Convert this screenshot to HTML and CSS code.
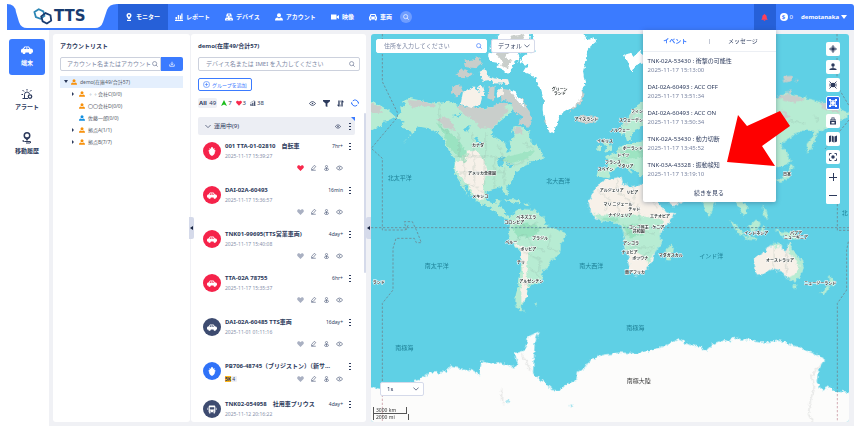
FILE: index.html
```html
<!DOCTYPE html>
<html lang="ja">
<head>
    <meta charset="UTF-8">
    <meta name="viewport" content="width=device-width, initial-scale=1.0">
    <title>TTS モニター</title>
    <link rel="stylesheet" href="styles.css">
</head>
<body>

<!-- Shared icons -->
<svg class="sprite" aria-hidden="true">
    <symbol id="i-pin" viewBox="0 0 16 16"><path fill-rule="evenodd" d="M8 0a5 5 0 0 1 5 5c0 3-3 5-3.500 7h-3C6 10 3 8 3 5a5 5 0 0 1 5-5zm0 3a2.200 2.200 0 1 0 0 4.400A2.200 2.200 0 0 0 8 3z"/><path d="M4 13.500h8V16H4z"/></symbol>
    <symbol id="i-chart" viewBox="0 0 16 16"><path d="M1 8h3v5H1zM5.500 4h3v9h-3zM10 5h2v8h-2zM12.500 1H15v12h-2.500zM0 14h16v2H0z"/></symbol>
    <symbol id="i-device" viewBox="0 0 16 16"><path fill-rule="evenodd" d="M4 1h8l2 6H9v2h5l2 3v3H0v-3l2-3h4V7H2zm2 2v2h4V3zM3 12v1h3v-1zm7 0v1h3v-1z"/></symbol>
    <symbol id="i-user" viewBox="0 0 16 16"><circle cx="8" cy="4.500" r="4"/><path d="M0 15c0-4 2-6 5-6l3 2 3-2c3 0 5 2 5 6z"/></symbol>
    <symbol id="i-video" viewBox="0 0 16 16"><path d="M0 3h11v10H0zM11.500 7 16 4v8l-4.500-3z"/></symbol>
    <symbol id="i-carfront" viewBox="0 0 16 16"><path fill-rule="evenodd" d="M3 2h10l2 5 1 1v5h-1v2h-3v-2H4v2H1v-2H0V8l1-1zm1.500 2L3.500 7h9l-1-3zM2 9v2h3V9zm9 0v2h3V9z"/></symbol>
    <symbol id="i-car" viewBox="0 0 20 14"><path fill-rule="evenodd" d="M6 1h7l3 4c3 0 4 1 4 4v2h-2a2.500 2.500 0 0 1-5 0H7.500a2.500 2.500 0 0 1-5 0H0V8c0-2 1-3 3-3zm1 1.500L5 5.500h4v-3zm3.500 0v3H14l-2-3z"/><circle cx="5" cy="11.500" r="1.600"/><circle cx="15.500" cy="11.500" r="1.600"/></symbol>
    <symbol id="i-bus" viewBox="0 0 16 16"><path fill-rule="evenodd" d="M3 1h10l1 2v10h-1v2h-2v-2H5v2H3v-2H2V3zm1 3v4h8V4zm0 6v1.500h2V10zm6 0v1.500h2V10zM0 5h1v4H0zm15 0h1v4h-1z"/></symbol>
    <symbol id="i-fruit" viewBox="0 0 16 16"><path d="M7 0h2l1 3 3-1-1 3 3 2-2 1c1 4-2 6-5 8-3-2-6-4-5-8L1 7l3-2-1-3 3 1z"/></symbol>
    <symbol id="i-search" viewBox="0 0 16 16"><circle cx="7" cy="7" r="5.500" fill="none" stroke="currentColor" stroke-width="1.800"/><path d="m11 11 4 4" stroke="currentColor" stroke-width="2"/></symbol>
    <symbol id="i-eye" viewBox="0 0 18 12"><path d="M1 6q8-10 16 0-8 10-16 0z" fill="none" stroke="currentColor" stroke-width="2"/><circle cx="9" cy="6" r="2"/></symbol>
    <symbol id="i-funnel" viewBox="0 0 16 16"><path d="M0 0h16v3l-6 5v8l-4-2V8L0 3z"/></symbol>
    <symbol id="i-sort" viewBox="0 0 16 16"><path d="M3 1h3v14H3L0 11h3zM10 1h3l3 4h-3v10h-3zM8 1h1v4H8zM8 10h1v5H8z"/></symbol>
    <symbol id="i-refresh" viewBox="0 0 16 16"><path d="M2 9a6 6 0 0 0 10.500 3M14 7A6 6 0 0 0 3.500 4" fill="none" stroke="currentColor" stroke-width="2"/><path d="M3 8 0 11V6zM13 8l3-3v5z"/></symbol>
    <symbol id="i-heart" viewBox="0 0 16 14"><path d="M8 14 1 7C-2 2 5-2 8 3c3-5 10-1 7 4z"/></symbol>
    <symbol id="i-pencil" viewBox="0 0 16 16"><path d="m3 9 7-8 4 3-7 8-4 1zM2 14h12" fill="none" stroke="currentColor" stroke-width="1.800"/></symbol>
    <symbol id="i-track" viewBox="0 0 16 16"><circle cx="8" cy="4" r="2.800" fill="none" stroke="currentColor" stroke-width="1.800"/><path d="M3 9h10M8 7v7M2 11c0 5 12 5 12 0" fill="none" stroke="currentColor" stroke-width="1.800"/></symbol>
    <symbol id="i-signal" viewBox="0 0 16 16"><path d="M1 10h3v5H1zM6 7h3v8H6zM11 3h3v12h-3z"/><path d="M1 7 12 1M2 15h13" stroke="currentColor"/></symbol>
    <symbol id="i-down" viewBox="0 0 16 16"><path d="M2 9v5h12V9M8 2v8M5 7l3 3 3-3" fill="none" stroke="currentColor" stroke-width="2"/></symbol>
    <symbol id="i-chevron" viewBox="0 0 16 10"><path d="m1 1 7 7 7-7" fill="none" stroke="currentColor" stroke-width="1.800"/></symbol>
    <symbol id="i-plus" viewBox="0 0 16 16"><circle cx="8" cy="8" r="7" fill="none" stroke="currentColor" stroke-width="1.400"/><path d="M4 8h8M8 4v8" stroke="currentColor" stroke-width="1.400"/></symbol>
    <symbol id="i-bell" viewBox="0 0 16 16"><path d="M8 0c1 0 1.500.5 1.500 1.500C12 2 13 4 13 7c0 3 1 4 2 5v1H1v-1c1-1 2-2 2-5 0-3 1-5 3.500-5.500C6.500.5 7 0 8 0zM6 14h4c0 3-4 3-4 0z"/></symbol>
    <symbol id="i-alarm" viewBox="0 0 24 22"><path d="M7 20V12q0-5 5-5 4 0 5 4M3 20h11M4 12H1M6 6 3 3M12 4V1M18 6l3-3" fill="none" stroke="currentColor" stroke-width="2"/><circle cx="18" cy="16" r="3.500" fill="none" stroke="currentColor" stroke-width="2.500"/></symbol>
    <symbol id="i-history" viewBox="0 0 22 24"><circle cx="11" cy="7" r="5.500" fill="none" stroke="currentColor" stroke-width="3"/><path d="M8 12h6l-3 5zM4 16q-4 3 2 3h11q4 1 0 3H9" stroke="currentColor" stroke-width="2" fill="none"/></symbol>
    <symbol id="i-target" viewBox="0 0 16 16"><circle cx="8" cy="8" r="5" fill="none" stroke="currentColor"/><circle cx="8" cy="8" r="3.500"/><path d="M8 0v16M0 8h16" stroke="currentColor" stroke-width="1.600"/></symbol>
    <symbol id="i-stand" viewBox="0 0 16 16"><circle cx="8" cy="4" r="3.500"/><path d="M7 7h2v4H7zM1 12q7-4 14 0v2H1z"/></symbol>
    <symbol id="i-cross" viewBox="0 0 16 16"><circle cx="8" cy="8" r="4.500"/><path d="m1 1 14 14M15 1 1 15M2 5v6M14 5v6" stroke="currentColor" stroke-width="1.800"/></symbol>
    <symbol id="i-fence" viewBox="0 0 16 16"><path d="M3 3h10v10H3z" fill="none" stroke="currentColor" stroke-width="1.500"/><circle cx="8" cy="8" r="4"/><path d="M0 0h4v4H0zM12 0h4v4h-4zM0 12h4v4H0zM12 12h4v4h-4z"/></symbol>
    <symbol id="i-case" viewBox="0 0 16 16"><path fill-rule="evenodd" d="M5 1h6v4h3v2H2V5h3zm1.500 1.500V5h3V2.500zM2 8h12v7H2zm3 2v3h6v-3z"/></symbol>
    <symbol id="i-map" viewBox="0 0 16 16"><path d="M0 2 4 1v12l-4 2zM5.500 1l4 2v12l-4-2zM11 3l5-2v12l-5 2z"/></symbol>
    <symbol id="i-focus" viewBox="0 0 16 16"><circle cx="8" cy="8" r="3.500"/><path d="M1 5V1h4M11 1h4v4M15 11v4h-4M5 15H1v-4" fill="none" stroke="currentColor" stroke-width="1.800"/></symbol>
</svg>

<!-- Top bar -->
<header class="topbar">
    <a class="logo" href="#">
        <svg class="logo-shape" viewBox="0 0 110 26"><path d="M0 0Q8 0 9 8L12 18Q14 24 20 24H88Q94 24 96 18L100 6Q102 0 110 0z" fill="#fff"/></svg>
        <svg class="logo-mark" viewBox="0 0 56 50"><path d="m4 14 12-8 13 6 3 13-11 8-13-5z" stroke="#2c86b4"/><path d="m23 26 12-9 14 6 2 15-12 8-12-6z" stroke="#183b70"/></svg>
        <span>TTS</span>
    </a>
    <nav class="main-nav">
        <a class="active" href="#"><svg><use href="#i-pin"/></svg>モニター</a>
        <a href="#"><svg><use href="#i-chart"/></svg>レポート</a>
        <a href="#"><svg><use href="#i-device"/></svg>デバイス</a>
        <a href="#"><svg><use href="#i-user"/></svg>アカウント</a>
        <a href="#"><svg><use href="#i-video"/></svg>映像</a>
        <a href="#"><svg><use href="#i-carfront"/></svg>車両</a>
    </nav>
    <button class="nav-search" type="button" aria-label="検索"><svg><use href="#i-search"/></svg></button>

    <div class="topbar-right">
        <div class="bell-wrap">
            <button class="bell" type="button" aria-label="通知"><svg><use href="#i-bell"/></svg></button>
            <div class="popup">
                <div class="popup-tabs">
                    <button class="active" type="button">イベント</button>
                    <span>|</span>
                    <button type="button">メッセージ</button>
                </div>
                <ul class="events" id="events"></ul>
                <a class="more" href="#">続きを見る</a>
                <svg class="arrow" viewBox="0 0 64 56"><path d="M0 48 11 1 20 12 53 -3 63 12 35 32 48 52z" fill="#fe0000"/></svg>
            </div>
        </div>
        <span class="coins"><i>$</i>0</span>
        <button class="account" type="button">demotanaka<span class="caret"></span></button>
    </div>
</header>

<div class="layout">
    <!-- Left menu -->
    <aside class="side">
        <a class="active" href="#"><svg><use href="#i-car"/></svg>端末</a>
        <a href="#"><svg><use href="#i-alarm"/></svg>アラート</a>
        <a href="#"><svg><use href="#i-history"/></svg>移動履歴</a>
    </aside>

    <main class="content">
        <!-- Accounts -->
        <section class="panel accounts">
            <h2>アカウントリスト</h2>
            <div class="search-row">
                <label class="field">
                    <input type="text" aria-label="アカウント検索" placeholder="アカウント名またはアカウント">
                    <svg><use href="#i-search"/></svg>
                </label>
                <button class="download" type="button" aria-label="ダウンロード"><svg><use href="#i-down"/></svg></button>
            </div>
            <ul class="tree">
                <li class="selected"><b class="open"></b><svg><use href="#i-user"/></svg>demo(在庫49/合計57)</li>
                <li class="child"><b></b><svg><use href="#i-user"/></svg>◦◦会社C(0/0)</li>
                <li class="child"><b class="none"></b><svg><use href="#i-user"/></svg>〇〇会社D(0/0)</li>
                <li class="child person"><b class="none"></b><svg><use href="#i-user"/></svg>佐藤一郎(0/0)</li>
                <li class="child"><b></b><svg><use href="#i-user"/></svg>拠点A(1/1)</li>
                <li class="child"><b></b><svg><use href="#i-user"/></svg>拠点B(7/7)</li>
            </ul>
        </section>

        <!-- Devices -->
        <section class="panel devices">
            <button class="handle" type="button" aria-label="閉じる"></button>
            <h2>demo(在庫49/合計57)</h2>
            <label class="field">
                <input type="text" aria-label="デバイス検索" placeholder="デバイス名または IMEI を入力してください">
                <svg><use href="#i-search"/></svg>
            </label>
            <button class="add-group" type="button"><svg><use href="#i-plus"/></svg>グループを追加</button>
            <div class="stats">
                <span class="all"><b>All</b> 49</span>
                <span class="moving"><svg viewBox="0 0 12 12"><path d="M6 0 12 12 6 9 0 12z"/></svg>7</span>
                <span class="alive"><svg><use href="#i-heart"/></svg>3</span>
                <span class="online"><svg><use href="#i-signal"/></svg>38</span>
                <span class="tools">
                    <svg><use href="#i-eye"/></svg>
                    <svg><use href="#i-funnel"/></svg>
                    <svg><use href="#i-sort"/></svg>
                    <svg class="refresh"><use href="#i-refresh"/></svg>
                </span>
            </div>
            <div class="group">
                <svg><use href="#i-chevron"/></svg>
                <span>運用中(9)</span>
                <svg><use href="#i-eye"/></svg>
                <em class="dots"></em>
            </div>
            <ul class="device-list" id="devices"></ul>
            <div class="scrollbar"></div>
        </section>

        <!-- Map -->
        <section class="map">
            <button class="handle" type="button" aria-label="閉じる"></button>
            <svg class="world" viewBox="0 0 1434 1164" preserveAspectRatio="xMidYMid slice">
                <defs>
                    <filter id="coast" x="-5%" y="-5%" width="110%" height="110%">
                        <feTurbulence type="fractalNoise" baseFrequency="0.08" numOctaves="3" seed="4" result="n"/>
                        <feDisplacementMap in="SourceGraphic" in2="n" scale="16" xChannelSelector="R" yChannelSelector="G"/>
                    </filter>
                </defs>
                <rect width="1434" height="1164" fill="#5fd0e5"/>
                <g filter="url(#coast)">
                    <!-- North America -->
                    <g transform="translate(-9 -12)">
                        <path class="green" d="M0 218 30 222 60 240 84 262 65 272 45 275 40 290 20 295 0 305zM85 262 100 245 97 235 115 222 98 215 130 205 165 212 205 220 240 215 262 222 300 234 345 235 395 228 425 222 440 225 430 245 412 262 395 275 372 295 370 312 388 328 410 338 418 365 430 358 425 335 440 318 432 295 450 288 470 298 485 305 483 322 500 345 515 352 522 372 525 388 505 392 480 400 462 412 445 425 438 445 418 470 420 494 408 488 398 472 375 478 358 482 352 500 358 515 378 520 385 508 398 512 390 530 410 540 412 558 430 562 425 570 400 562 385 545 360 530 330 518 312 500 295 468 288 470 305 500 285 475 275 455 262 435 258 410 262 385 250 372 235 352 225 325 205 305 180 295 155 290 140 300 105 342 130 315 120 300 100 290 110 275z"/>
                        <path class="beige" d="M262 400 278 382 300 365 325 360 345 385 358 420 345 470 350 500 335 512 318 490 300 466 280 440 262 418z"/>
                        <path class="deep" d="M205 278 240 300 270 330 300 375 290 400 268 375 240 350 230 320z" opacity=".55"/>
                        <path class="deep" d="M400 385 440 375 500 360 480 385 430 400z" opacity=".45"/>
                        <path class="grey" d="M120 210 165 214 205 222 190 232 160 228 135 238zM205 265 240 262 262 300 235 295zM262 226 345 236 395 228 422 240 395 270 372 295 330 290 318 268 295 258zM436 296 455 290 465 310 440 312zM0 222 35 228 42 248 0 250z"/>
                        <path class="grey" d="M395 175 425 180 460 205 480 235 490 262 485 290 445 280 465 262 440 245 430 218 400 208zM362 168 380 170 378 212 358 205zM262 132 285 118 315 132 300 142 272 140zM290 92 335 85 345 100 325 115 295 112zM253 170 275 163 285 185 265 200 252 190zM375 228 400 215 420 225 400 240z"/>
                        <path class="beige" d="M285 185 320 170 342 200 335 228 310 234 278 222zM330 165 346 170 352 198 336 195zM388 180 402 172 408 195 390 200zM335 125 350 118 362 140 388 148 345 152zM370 145 420 148 424 162 375 160z"/>
                        <path class="ice" d="M365 50 405 0 490 0 475 60 450 70 455 85 440 100 425 132 385 112 395 100 370 95 360 75 380 60zM425 180 445 190 465 215 470 230 450 215z"/>
                        <path class="grey" d="M385 70 412 50 425 55 410 85 430 90 420 115 400 108 405 92zM425 20 470 12 450 55 425 48z"/>
                        <path class="water" d="M255 258 280 250 270 265zM285 298 310 285 295 305zM318 325 325 320 345 350zM388 385 410 382 400 412 392 400zM412 395 430 405 440 400 428 412z"/>
                        <!-- Greenland, Iceland, Svalbard -->
                        <path class="grey" d="M640 180 650 195 636 222 605 246 620 215zM524 205 535 240 528 272 545 305 565 292 550 250z"/>
                        <path class="ice" d="M500 0 640 0 655 28 680 22 684 35 660 55 652 95 645 125 652 165 638 178 640 205 625 225 600 240 575 255 565 285 558 310 540 300 532 270 527 240 528 210 520 180 500 140 465 125 478 105 452 98 470 75 500 65 495 30zM768 75 785 70 795 82 815 62 828 72 828 100 805 105 790 128 780 100z"/>
                        <path class="grey" d="M622 262 650 256 688 262 680 275 650 280 630 275z"/>
                        <path class="green" d="M405 508 440 508 460 518 445 520zM462 520 485 522 475 528z"/>
                    </g>
                    <!-- South America -->
                    <g transform="translate(-9 558)">
                        <path class="green" d="M428-12 455-34 500-30 530-5 535 15 565 28 592 38 592 55 578 72 578 95 565 115 545 122 540 140 518 160 526 175 510 192 485 195 478 215 475 240 464 246 458 262 474 274 455 272 442 250 443 225 450 200 458 150 460 100 445 85 425 55 420 40 425 20z"/>
                        <path class="deep" d="M430 20 480 10 520 22 500 50 450 52z" opacity=".6"/>
                        <path class="beige" d="M430 62 455 78 482 88 480 120 475 160 480 195 474 240 460 248 460 190 464 130 458 96z"/>
                        <path class="green" d="M498 252 508 250 504 256z"/>
                    </g>
                    <!-- Europe -->
                    <g transform="translate(627 138)">
                        <path class="green" d="M210 50 165 80 150 105 130 130 115 150 125 165 133 158 142 187 152 180 155 165 165 150 210 130zM68 185 78 178 90 190 96 212 72 218 80 202zM52 195 66 194 66 212 52 214zM85 225 105 220 120 200 140 192 210 180V290L178 288 165 268 150 262 155 282 135 262 115 258 95 275 85 295 65 292 52 290 57 270 82 262 85 240 78 230z"/>
                        <path class="deep" d="M120 215 190 205V235L130 235z" opacity=".5"/>
                        <path class="grey" d="M175 75 150 112 130 135 140 138 165 100z" opacity=".6"/>
                    </g>
                    <!-- Africa and Arabia -->
                    <path class="beige" d="M691 440 751 428 756 448 781 460 831 446 870 452 890 490 905 520 940 500 950 470 880 440 840 470 867 513 887 536 912 536 909 545 887 573 867 598 872 628 852 653 847 678 832 698 812 720 792 724 777 713 772 688 772 668 759 638 762 613 755 588 747 568 727 563 687 560 671 553 656 528 653 503 669 468z"/>
                    <path class="green" d="M664 540 720 545 780 542 840 550 880 560 867 598 872 628 852 653 832 690 820 668 790 650 762 650 762 613 755 588 747 568 727 563 687 560z"/>
                    <path class="deep" d="M755 575 800 570 815 600 775 612zM690 552 740 552 745 562 700 558z" opacity=".6"/>
                    <!-- Asia and Oceania -->
                    <g transform="translate(687 498)">
                        <path class="green" d="M197 150 215 133 222 145 208 185 198 182zM303-5 325 48 332 52 340 20 355-5zM400-5 412 20 420 30 430 48 444 40 440 15 425-5zM388 60 410 75 432 100 425 108 405 88zM445 80 465 62 482 66 475 90 455 95zM430 108 468 112 470 118 435 116zM484 82 495 78 490 100 484 98zM523 88 545 95 575 97 605 118 575 114 555 116 540 102zM488 12 498 30 506 50 498 60 490 40zM686 222 698 240 708 243 700 260 690 250zM692 258 672 284 660 280 680 262zM580 255 592 256 588 268 582 264z"/>
                        <path class="beige" d="M460 178 480 165 495 155 505 140 520 135 530 128 546 132 545 145 558 155 568 122 578 150 590 165 606 185 611 205 600 230 585 243 560 236 550 222 540 213 515 208 490 222 468 224 465 200z"/>
                        <path class="green" d="M568 122 578 150 590 165 606 185 611 205 600 230 585 243 560 236 590 220 598 200 585 175 565 160zM512 136 530 128 546 132 530 142z"/>
                    </g>
                    <g transform="translate(1107 0)">
                        <path class="green" d="M80 190 110 192 140 175 160 180 180 188 215 196 245 205 275 215 325 235 325 250 300 258 265 275 250 290 232 292 225 320 210 350 202 355 200 330 220 305 225 290 190 290 165 300 155 310 120 332 138 350 152 380 130 398 80 400zM153 393 160 400 150 412 145 432 120 447 110 440 140 422z"/>
                        <path class="grey" d="M110 190 140 178 165 184 195 196 170 205 130 200zM125 225 150 250 135 255zM240 205 290 222 300 235 250 225zM128 128 155 125 155 142 135 145zM165 138 178 142 170 146zM140 172 155 168 150 178z"/>
                    </g>
                    <!-- Antarctica -->
                    <path class="south" d="M-20 1052 31 1066 141 1038 176 1016 231 1013 236 998 301 1008 326 1023 331 983 371 990 391 986 426 1000 441 990 431 958 461 948 471 908 503 893 491 928 486 1018 516 1043 546 1068 566 1068 591 1048 616 1038 621 1013 641 1003 656 978 691 963 747 956 807 958 867 941 922 916 962 933 987 938 1005 950 1027 928 1057 918 1077 923 1087 908 1107 916 1137 918 1167 926 1227 920 1277 938 1327 958 1362 978 1342 1008 1337 1043 1352 1068 1372 1058 1397 1073 1454 1078V1190H-20z"/>
                    <path class="water" d="M405 1095 414 1100 410 1108zM596 1114 604 1112 600 1120z"/>
                    <path d="M1350 990 1322 1025 1330 1060 1318 1100 1312 1140 1325 1164M392 1065V1100L400 1110M452 960 480 1010" fill="none" stroke="#e4e5e4" stroke-width="4"/>
                    <!-- Borders -->
                    <path class="border" d="M205 210V270L235 300M253 367H360L400 378 430 395 470 375M264 295V367M305 295V367M345 295V367M380 330 400 378M280 367V440M310 367V450M340 367V455M370 372V465M400 400V455M265 415H400M275 455 310 455 340 480M455 325 490 345M425 570 470 580 500 565M430 620 460 600 490 640 520 650M490 585 530 580M450 650 510 680 500 720M475 700 505 730M460 750H475M540 600 530 640 560 650"/>
                    <path class="border" d="M680 470 720 500 700 530M740 435 735 470 790 510M790 460V500M740 545 745 500M800 510 805 560M830 450V490L860 520M760 600 800 590 850 600M780 640H850M800 680 840 650M1207 640V700M1247 640V720M1207 680H1250M740 350 780 345 820 355M725 370 760 380 790 400M1230 280 1260 260 1300 270M1330 240 1340 265"/>
                </g>
                <g class="dash">
                    <path d="M0 581H1434M34 0V143L79 235V250L1 343 34 373V588H103L112 573M106 588 100 563 124 563 137 590 151 626H136L130 613H75L66 643V768L34 808V1055"/>
                    <path d="M1398 0V155L1434 215M1434 258 1362 345M1399 498V589H1434M1432 623 1427 648V768L1399 808V1075"/>
                    <path d="M34 1070V1164M1399 1080V1164" stroke="#d3adb4"/>
                </g>
                <g class="label">
                    <text x="321" y="338">カナダ</text>
                    <text x="333" y="422">アメリカ合衆国</text>
                    <text x="328" y="492">メキシコ</text>
                    <text x="566" y="172">グリーン</text><text x="566" y="184">ランド</text>
                    <text x="646" y="260">アイスランド</text>
                    <text x="466" y="555">ベネズエラ</text>
                    <text x="430" y="571">コロンビア</text>
                    <text x="421" y="629">ペルー</text>
                    <text x="507" y="618">ブラジル</text>
                    <text x="472" y="650">ボリビア</text>
                    <text x="450" y="691">チリ</text>
                    <text x="481" y="747">アルゼンチン</text>
                    <text x="798" y="236">フィン</text>
                    <text x="780" y="263">スウェーデン</text>
                    <text x="747" y="293">ノルウェー</text>
                    <text x="702" y="328">イギリス</text>
                    <text x="785" y="348">ポーランド</text>
                    <text x="757" y="369">ドイツ</text>
                    <text x="726" y="389">フランス</text>
                    <text x="764" y="403">イタリア</text>
                    <text x="704" y="411">スペイン</text>
                    <text x="722" y="474">アルジェリア</text>
                    <text x="784" y="479">リビア</text>
                    <text x="741" y="517">マリ ニジェール</text>
                    <text x="790" y="532">チャド</text>
                    <text x="748" y="550">ナイジェリア</text>
                    <text x="867" y="552">エチオピア</text>
                    <text x="803" y="585">コンゴ民主</text><text x="803" y="598">共和国</text>
                    <text x="862" y="584">ケニア</text>
                    <text x="780" y="632">アンゴラ</text>
                    <text x="776" y="660">ナミビア</text>
                    <text x="808" y="677">ボツワナ</text>
                    <text x="792" y="720">南アフリカ</text>
                    <text x="899" y="669">マダガスカル</text>
                    <text x="1156" y="602">インドネシア</text>
                    <text x="1275" y="602">パプア</text><text x="1275" y="615">ニューギニア</text>
                    <text x="1227" y="683">オーストラリア</text>
                    <text x="1348" y="752">ニュージーランド</text>
                    <text x="23" y="751">ランド</text>
                    <text x="1248" y="425">日本</text>
                </g>
                <g class="sea">
                    <text x="86" y="438">北太平洋</text>
                    <text x="562" y="447">北大西洋</text>
                    <text x="197" y="703">南太平洋</text>
                    <text x="661" y="702">南大西洋</text>
                    <text x="1021" y="673">インド洋</text>
                    <text x="100" y="947">南極海</text>
                    <text x="793" y="887">南極海</text>
                    <text x="1421" y="542">北</text>
                    <text class="land" x="803" y="1048">南極大陸</text>
                </g>
            </svg>

            <div class="map-top">
                <label class="field address">
                    <input type="text" aria-label="住所" placeholder="住所を入力してください">
                    <svg><use href="#i-search"/></svg>
                </label>
                <label class="pick">
                    <select aria-label="地図の表示"><option>デフォル</option></select>
                    <svg><use href="#i-chevron"/></svg>
                </label>
            </div>

            <div class="map-tools">
                <button type="button" aria-label="現在地"><svg><use href="#i-target"/></svg></button>
                <button type="button" aria-label="ストリートビュー"><svg><use href="#i-stand"/></svg></button>
                <button type="button" aria-label="非表示"><svg><use href="#i-cross"/></svg></button>
                <button class="on" type="button" aria-label="ジオフェンス"><svg><use href="#i-fence"/></svg></button>
                <button type="button" aria-label="POI"><svg><use href="#i-case"/></svg></button>
                <button type="button" aria-label="地図"><svg><use href="#i-map"/></svg></button>
                <button type="button" aria-label="全体"><svg><use href="#i-focus"/></svg></button>
                <div class="zoom">
                    <button class="in" type="button" aria-label="拡大"></button>
                    <button type="button" aria-label="縮小"></button>
                </div>
            </div>

            <div class="map-bottom">
                <label class="pick">
                    <select aria-label="更新間隔"><option>1s</option></select>
                    <svg><use href="#i-chevron"/></svg>
                </label>
                <div class="scale"><span class="km">3000 km</span><span class="mi">2000 mi</span></div>
            </div>
        </section>
    </main>
</div>

<script>
    const events = [
        ['TNK-02A-53430 : 衝撃の可能性', '2025-11-17 15:13:00'],
        ['DAI-02A-60493 : ACC OFF', '2025-11-17 13:51:34'],
        ['DAI-02A-60493 : ACC ON', '2025-11-17 13:50:34'],
        ['TNK-02A-53430 : 動力切断', '2025-11-17 13:45:52'],
        ['TNK-03A-43328 : 振動検知', '2025-11-17 13:19:10']
    ];

    const devices = [
        { name: '001 TTA-01-02810　自転車', date: '2025-11-17 15:39:27', ago: '7hr+', icon: 'fruit', color: 'red', alive: true },
        { name: 'DAI-02A-60493', date: '2025-11-17 15:36:57', ago: '16min', icon: 'car', color: 'red' },
        { name: 'TNK01-99695(TTS営業車両)', date: '2025-11-17 15:40:08', ago: '4day+', icon: 'car', color: 'red' },
        { name: 'TTA-02A 78755', date: '2025-11-17 15:35:37', ago: '6hr+', icon: 'car', color: 'red' },
        { name: 'DAI-02A-60485 TTS車両', date: '2025-11-01 01:11:16', ago: '16day+', icon: 'car', color: 'navy' },
        { name: 'PB706-48745（ブリジストン）（新サ…', badge: '5K', icon: 'fruit', color: 'blue' },
        { name: 'TNK02-054958　社用車プリウス', date: '2025-11-12 20:16:22', ago: '4day+', icon: 'bus', color: 'navy' }
    ];

    const icon = name => `<svg><use href="#i-${name}"/></svg>`;

    document.getElementById('events').innerHTML = events.map(e =>
        `<li><strong>${e[0]}</strong><time>${e[1]}</time></li>`
    ).join('');

    // One row per device, the badge takes the place of the date
    document.getElementById('devices').innerHTML = devices.map(d => `
        <li class="${d.badge ? 'compact' : ''}">
            <span class="avatar ${d.color}">${icon(d.icon)}</span>
            <div class="info">
                <div class="title"><strong>${d.name}</strong>${d.ago ? `<small>${d.ago}</small>` : ''}</div>
                ${d.date ? `<time>${d.date}</time>` : ''}
                <div class="actions">
                    ${d.badge ? `<span class="badge"><b>${d.badge}</b>4</span>` : ''}
                    <span class="${d.alive ? 'alive' : 'idle'}">${icon('heart')}</span>${icon('pencil')}${icon('track')}${icon('eye')}
                </div>
            </div>
            <em class="dots"></em>
        </li>`
    ).join('');
</script>

</body>
</html>
```

FILE: styles.css
```css
* {
    box-sizing: border-box;
}
body {
    font-family: "Noto Sans", "Noto Sans CJK JP", sans-serif;
    font-size: 6px;
    line-height: 10px;
    color: #2c3a5c;
    background-color: #fff;
    display: flex;
    flex-direction: column;
    height: 100vh;
    margin: 0;
    padding: 4px 10px 6px 7px;
    overflow: hidden;
}
a {
    color: inherit;
    text-decoration: none;
}
ul {
    list-style: none;
    margin: 0;
    padding: 0;
}
button, input, select {
    font: inherit;
    color: inherit;
    border: 0;
    padding: 0;
    margin: 0;
    background: none;
}
button {
    cursor: pointer;
}
svg {
    display: block;
    flex: none;
    width: 8px;
    height: 8px;
    fill: currentColor;
}
.sprite {
    position: absolute;
    width: 0;
    height: 0;
}

/* Top bar */
.topbar {
    display: flex;
    flex: none;
    height: 26px;
    background-color: #3b7bff;
    border-radius: 0 3px 0 0;
    color: #fff;
    font-weight: bold;
}
.logo {
    position: relative;
    display: flex;
    align-items: center;
    gap: 1px;
    width: 111px;
    padding: 0 0 3px 26px;
    color: #183b70;
    font-family: "DejaVu Sans", sans-serif;
    font-size: 15px;
}
.logo-shape {
    position: absolute;
    left: 0;
    top: 0;
    width: 110px;
    height: 26px;
}
.logo-mark {
    position: relative;
    width: 20px;
    height: 18px;
    fill: none;
    stroke-width: 5;
}
.logo span {
    position: relative;
}
.main-nav {
    display: flex;
}
.main-nav a {
    display: flex;
    align-items: center;
    gap: 3px;
    padding: 0 8px 0 7px;
}
.main-nav a.active, .bell {
    background-color: #2660d8;
}
.nav-search {
    align-self: center;
    display: grid;
    place-items: center;
    width: 12px;
    height: 12px;
    border-radius: 50%;
    background-color: #6f9dff;
}
.nav-search svg {
    width: 6px;
    height: 6px;
}
.topbar-right {
    display: flex;
    align-items: center;
    margin-left: auto;
    padding-right: 7px;
}
.bell-wrap {
    position: relative;
    height: 26px;
    margin-right: 4px;
}
.bell {
    display: grid;
    place-items: center;
    width: 22px;
    height: 26px;
    color: #ff4058;
}
.bell svg {
    width: 7px;
    height: 7px;
}
.coins {
    display: flex;
    gap: 2px;
    align-items: center;
    margin-right: 8px;
    font-weight: normal;
}
.coins i {
    width: 8px;
    height: 8px;
    border-radius: 50%;
    background-color: #fff;
    color: #3b7bff;
    font-style: normal;
    font-weight: bold;
    line-height: 8px;
    text-align: center;
}
.account {
    display: flex;
    align-items: center;
    gap: 2px;
}
.caret {
    border: 3px solid transparent;
    border-top: 4px solid #fff;
    border-bottom: 0;
}

/* Event popup */
.popup {
    position: absolute;
    top: 100%;
    right: 0;
    z-index: 5;
    width: 133px;
    padding-bottom: 4px;
    background-color: #fff;
    border-radius: 0 0 2px 2px;
    box-shadow: 0 1px 5px rgba(40, 60, 90, 0.4);
    color: #2c3a5c;
    font-weight: normal;
}
.popup-tabs {
    display: grid;
    grid-template-columns: 1fr 2px 1fr;
    height: 22px;
    align-items: center;
    border-bottom: 1px solid #eceff4;
    color: #7b86a3;
}
.popup-tabs button {
    color: #2c3a5c;
}
.popup-tabs .active {
    color: #3b7bff;
    font-weight: bold;
}
.events {
    padding: 5px 5px 1px;
}
.events li {
    display: flex;
    flex-direction: column;
    line-height: 9px;
    margin-bottom: 8px;
}
.events strong {
    font-weight: normal;
}
.events time {
    color: #7b86a3;
}
.more {
    display: block;
    text-align: center;
}
.arrow {
    position: absolute;
    left: 84px;
    top: 84px;
    width: 64px;
    height: 56px;
    overflow: visible;
}

/* Left menu */
.layout {
    display: flex;
    flex: 1;
    min-height: 0;
}
.side {
    display: flex;
    flex-direction: column;
    gap: 8px;
    width: 42px;
    padding: 9px 4px 0 2px;
}
.side a {
    display: flex;
    flex-direction: column;
    align-items: center;
    gap: 2px;
    height: 36px;
    padding-top: 5px;
    border-radius: 3px;
    font-weight: bold;
}
.side svg {
    width: 12px;
    height: 12px;
}
.side .active {
    background-color: #3b7bff;
    color: #fff;
}

/* Panels */
.content {
    display: flex;
    flex: 1;
    min-width: 0;
    padding: 4px 5px 4px 4px;
    background-color: #f0f1f5;
}
.panel {
    position: relative;
    display: flex;
    flex-direction: column;
    flex: none;
    background-color: #fff;
    border-radius: 3px;
    padding: 7px 7px 0;
}
.accounts {
    width: 137px;
    margin-right: 1px;
}
.devices {
    width: 175px;
    margin-right: 5px;
}
h2 {
    margin: 0 0 6px;
    font-size: 6px;
    line-height: 10px;
}
.search-row {
    display: flex;
}
.field {
    display: flex;
    align-items: center;
    height: 14px;
    padding: 0 4px 0 7px;
    border: 1px solid #ccd1dd;
    border-radius: 2px;
    background-color: #fff;
    color: #6d7894;
}
.search-row .field {
    flex: 1;
    min-width: 0;
    padding: 0 2px 0 6px;
    border-radius: 2px 0 0 2px;
}
.field input {
    flex: 1;
    min-width: 0;
    outline: 0;
}
.field input::placeholder {
    color: #7b86a3;
    opacity: 1;
}
.field svg {
    width: 6px;
    height: 6px;
}
.download {
    display: grid;
    place-items: center;
    width: 22px;
    height: 14px;
    border-radius: 0 2px 2px 0;
    background-color: #3b7bff;
    color: #fff;
}
.download svg {
    width: 6px;
    height: 6px;
}

/* Account tree */
.tree {
    margin-top: 5px;
    font-size: 5px;
    color: #555b68;
}
.tree li {
    display: flex;
    align-items: center;
    gap: 3px;
    height: 12px;
    padding-left: 4px;
}
.tree li.child {
    padding-left: 12px;
}
.tree li.selected {
    background-color: #e4effd;
}
.tree svg {
    width: 6px;
    height: 6px;
    color: #f7900a;
}
.tree .person svg {
    color: #118fe0;
}
.tree b {
    width: 4px;
    height: 4px;
    border: 2px solid transparent;
    border-left-color: #2c3a5c;
    border-right: 0;
}
.tree b.open {
    border: 2px solid transparent;
    border-top: 3px solid #2c3a5c;
    border-bottom: 0;
}
.tree b.none {
    border-color: transparent;
}

/* Device list */
.devices .field {
    margin-right: -1px;
}
.add-group {
    display: flex;
    align-items: center;
    align-self: flex-start;
    gap: 2px;
    height: 13px;
    margin-top: 7px;
    padding: 0 4px;
    border: 1px solid #3b7bff;
    border-radius: 2px;
    color: #3b7bff;
    font-size: 5px;
}
.add-group svg {
    width: 7px;
    height: 7px;
}
.stats {
    display: flex;
    align-items: center;
    gap: 4px;
    margin-top: 7px;
}
.stats span {
    display: flex;
    align-items: center;
    gap: 1px;
}
.stats svg {
    width: 6px;
    height: 6px;
}
.stats .all {
    padding: 0 1px;
    border-radius: 2px;
    background-color: #eef0f5;
    white-space: pre;
}
.moving svg {
    color: #1bbd1b;
}
.alive svg {
    color: #f8294d;
}
.stats .tools {
    margin-left: auto;
    gap: 7px;
}
.stats .tools svg {
    width: 7px;
    height: 7px;
}
.stats .tools .refresh {
    width: 8px;
    height: 8px;
    color: #3b7bff;
}
.group {
    position: relative;
    display: flex;
    flex: none;
    align-items: center;
    gap: 3px;
    height: 18px;
    margin: 9px 4px 0 0;
    padding: 0 4px 0 7px;
    border-radius: 2px;
    background-color: #eceef4;
}
.group span {
    margin-right: auto;
}
.group svg {
    width: 6px;
    height: 5px;
}
.group .dots {
    margin-left: 5px;
}
.group::after {
    content: "";
    position: absolute;
    right: 0;
    top: 0;
    border-top: 4px solid #3b7bff;
    border-left: 4px solid transparent;
}
.dots {
    flex: none;
    width: 2px;
    height: 8px;
    background: radial-gradient(circle, #2c3a5c 1px, transparent 1px) 0 0 / 2px 3px;
}
.device-list {
    flex: 1;
    min-height: 0;
    overflow: hidden;
    margin-right: 4px;
    padding-top: 2px;
}
.device-list li {
    display: flex;
    gap: 4px;
    height: 44px;
    padding: 4px 4px 0 5px;
}
.device-list li.compact {
    height: 38px;
}
.device-list .dots {
    margin: 1px 0 0 2px;
}
.avatar {
    display: grid;
    place-items: center;
    flex: none;
    width: 18px;
    height: 18px;
    margin-top: 1px;
    border-radius: 50%;
    color: #fff;
}
.avatar svg {
    width: 10px;
    height: 9px;
}
.avatar.red {
    background-color: #f5234a;
}
.avatar.navy {
    background-color: #3d4b70;
}
.avatar.blue {
    background-color: #2f72f8;
}
.info {
    flex: 1;
    min-width: 0;
}
.title {
    display: flex;
    justify-content: space-between;
    white-space: nowrap;
}
.title small {
    font-size: 5px;
}
.info time {
    display: block;
    color: #8791ab;
    font-size: 5px;
}
.actions {
    display: flex;
    align-items: center;
    justify-content: flex-end;
    gap: 6px;
    height: 14px;
}
.compact .actions {
    margin-top: 1px;
}
.actions svg {
    width: 7px;
    height: 6px;
    color: #5c6885;
}
.actions .alive svg {
    color: #f8294d;
}
.actions .idle svg {
    color: #a9b0c2;
}
.badge {
    margin-right: auto;
    padding-right: 2px;
    border-radius: 1px;
    background-color: #eceef4;
    font-size: 5px;
    line-height: 6px;
}
.badge b {
    display: inline-block;
    margin-right: 1px;
    background-color: #ffb619;
}
.scrollbar {
    position: absolute;
    right: 0;
    top: 79px;
    width: 2px;
    height: 160px;
    border-radius: 2px;
    background-color: #d5daea;
}

/* Collapse handle between two panels */
.handle {
    position: absolute;
    left: -2px;
    top: 183px;
    z-index: 1;
    display: grid;
    place-items: center;
    width: 5px;
    height: 22px;
    border-radius: 0 2px 2px 0;
    background-color: #d5daea;
}
.handle::before {
    content: "";
    border: 2px solid transparent;
    border-right: 3px solid #14213f;
    border-left: 0;
}
.map .handle {
    left: -5px;
    border-radius: 2px 0 0 2px;
}

/* Map */
.map {
    position: relative;
    flex: 1;
    min-width: 0;
}
.world {
    width: 100%;
    height: 100%;
    border-radius: 3px;
}
.world .green {
    fill: #b7ecd3;
}
.world .deep {
    fill: #83dcb2;
}
.world .beige {
    fill: #f7f1e9;
}
.world .grey {
    fill: #c9cecb;
}
.world .ice {
    fill: #fff;
}
.world .south {
    fill: #fcfcfb;
}
.world .water {
    fill: #5fd0e5;
}
.world .border {
    fill: none;
    stroke: #8aa39c;
    stroke-width: 1;
}
.world .dash {
    fill: none;
    stroke: #6b94a0;
    stroke-width: 3;
    stroke-dasharray: 7 5;
}
.world text {
    text-anchor: middle;
}
.world .label {
    font-size: 12px;
    font-weight: bold;
    fill: #2b3433;
    stroke: #fff;
    stroke-width: 3;
    paint-order: stroke;
}
.world .sea {
    font-size: 18px;
    fill: #1c7f95;
}
.world .land {
    fill: #333;
}
.map-top {
    position: absolute;
    left: 5px;
    top: 5px;
    display: flex;
    gap: 4px;
}
.address {
    width: 111px;
    border-color: #fff;
}
.address svg {
    color: #3b7bff;
}
.pick {
    position: relative;
    display: block;
    width: 44px;
    height: 14px;
    border: 1px solid #d5daea;
    border-radius: 2px;
    background-color: #fff;
}
.pick select {
    display: block;
    appearance: none;
    width: 100%;
    height: 12px;
    padding-left: 6px;
    outline: 0;
}
.pick svg {
    position: absolute;
    right: 4px;
    top: 4px;
    width: 6px;
    height: 4px;
    pointer-events: none;
}
.map-tools {
    position: absolute;
    right: 9px;
    top: 8px;
    display: flex;
    flex-direction: column;
    gap: 4px;
}
.map-tools button {
    display: grid;
    place-items: center;
    width: 14px;
    height: 14px;
    border-radius: 2px;
    background-color: #fff;
}
.map-tools .on {
    border: 1px solid #fff;
    background-color: #2a66ee;
    color: #fff;
}
.map-tools .zoom {
    border-radius: 2px;
    background-color: #fff;
}
.map-tools .zoom button {
    height: 18px;
}
.zoom button::before, .zoom .in::after {
    content: "";
    grid-area: 1 / 1;
    width: 8px;
    height: 1px;
    background-color: #2c3a5c;
}
.zoom .in::after {
    width: 1px;
    height: 8px;
}
.map-bottom {
    position: absolute;
    left: 2px;
    bottom: 2px;
}
.map-bottom .pick {
    margin: 0 0 11px 7px;
}
.scale {
    display: flex;
    flex-direction: column;
    align-items: flex-start;
    font-size: 5px;
    line-height: 6px;
    color: #333;
}
.scale span {
    padding-left: 2px;
    border: 1px solid #555;
}
.scale .km {
    width: 34px;
    border-top: 0;
}
.scale .mi {
    width: 36px;
    border-top: 0;
    border-bottom: 0;
}
```
